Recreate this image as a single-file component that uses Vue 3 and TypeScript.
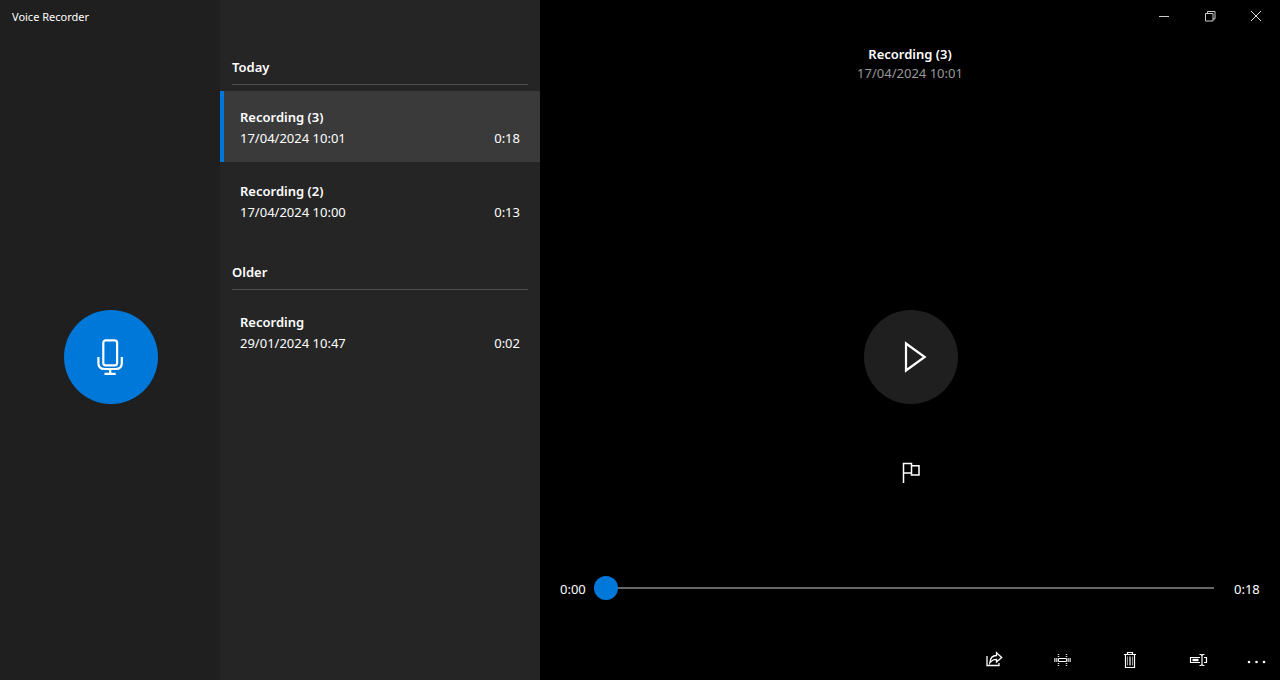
<script setup lang="ts">
import { computed, ref } from 'vue'

interface Recording {
  id: number
  name: string
  date: string
  seconds: number
}

interface Group {
  label: string
  items: Recording[]
}

const groups: Group[] = [
  {
    label: 'Today',
    items: [
      { id: 3, name: 'Recording (3)', date: '17/04/2024 10:01', seconds: 18 },
      { id: 2, name: 'Recording (2)', date: '17/04/2024 10:00', seconds: 13 },
    ],
  },
  {
    label: 'Older',
    items: [{ id: 1, name: 'Recording', date: '29/01/2024 10:47', seconds: 2 }],
  },
]

const selectedId = ref(3)
const position = ref(0)

const selected = computed(
  () => groups.flatMap((g) => g.items).find((r) => r.id === selectedId.value) ?? groups[0].items[0],
)

function formatTime(seconds: number): string {
  return `${Math.floor(seconds / 60)}:${String(seconds % 60).padStart(2, '0')}`
}

function select(id: number): void {
  selectedId.value = id
  position.value = 0
}
</script>

<template>
  <div class="window">
    <aside class="record-pane">
      <h1 class="app-title">Voice Recorder</h1>
      <div class="record-area">
        <button class="round record" type="button" aria-label="Record">
          <svg width="40" height="40" viewBox="1 0 40 40" fill="none" stroke="#fff" stroke-width="2.2">
            <rect x="13.3" y="3.4" width="13.8" height="25" rx="2.4" />
            <path d="M8.4 20v6q0 6 6 6h11.4q6 0 6-6v-6M20.2 32v5M14.5 36.8h11.2" />
          </svg>
        </button>
      </div>
    </aside>

    <nav class="list-pane" aria-label="Recordings">
      <section v-for="group in groups" :key="group.label" class="group">
        <h2 class="group-title">{{ group.label }}</h2>
        <ul class="items">
          <li v-for="item in group.items" :key="item.id">
            <button
              type="button"
              class="item"
              :class="{ selected: item.id === selectedId }"
              @click="select(item.id)"
            >
              <span class="item-name">{{ item.name }}</span>
              <span class="item-meta">
                <span>{{ item.date }}</span>
                <span>{{ formatTime(item.seconds) }}</span>
              </span>
            </button>
          </li>
        </ul>
      </section>
    </nav>

    <main class="player">
      <div class="caption">
        <button type="button" aria-label="Minimise">
          <svg width="12" height="12" viewBox="0 0 12 12" fill="none" stroke="#ccc"><path d="M1 6.5h10" /></svg>
        </button>
        <button type="button" aria-label="Restore">
          <svg width="12" height="12" viewBox="0 0 12 12" fill="none" stroke="#ccc">
            <path d="M1.5 3.5h7.500v7.500h-7.500zM3.500 3.500v-2h7.500v7.500h-2" />
          </svg>
        </button>
        <button type="button" aria-label="Close">
          <svg width="12" height="12" viewBox="0 0 12 12" fill="none" stroke="#ddd">
            <path d="M1 1l10 10M11 1L1 11" />
          </svg>
        </button>
      </div>

      <header class="heading">
        <h2>{{ selected.name }}</h2>
        <p>{{ selected.date }}</p>
      </header>

      <div class="transport">
        <button class="round play" type="button" aria-label="Play">
          <svg width="40" height="40" viewBox="1 0 40 40" fill="none" stroke="#fff" stroke-width="2.2">
            <path d="M16 6.5v27L34.700 20z" />
          </svg>
        </button>
      </div>

      <div class="marker-row">
        <button class="marker" type="button" aria-label="Add a marker">
          <svg width="24" height="24" viewBox="0 0 24 24" fill="none" stroke="#fff" stroke-width="1.5">
            <path d="M5.500 23V3.500h8V13h-8M13.500 5.700H21V15h-7.500v-2" />
          </svg>
        </button>
      </div>

      <div class="seek">
        <span class="elapsed">{{ formatTime(position) }}</span>
        <input
          v-model.number="position"
          type="range"
          min="0"
          :max="selected.seconds"
          aria-label="Playback position"
        />
        <span class="total">{{ formatTime(selected.seconds) }}</span>
      </div>

      <div class="toolbar">
        <button type="button" aria-label="Share">
          <svg width="20" height="20" viewBox="0 0 20 20" fill="none" stroke="#fff" stroke-width="1.3">
            <path d="M3 6v9.500h12V13" />
            <path d="M5.800 13C6.100 8.500 8.500 5.600 12.500 5.500V2.700l5.200 4.800-5.200 4.600V9.300C9.500 9.300 7.500 10.500 5.800 13z" />
          </svg>
        </button>
        <button type="button" aria-label="Trim">
          <svg width="20" height="20" viewBox="0 0 20 20" fill="none" stroke="#fff">
            <path d="M2.500 8v4M4.500 8v4M16.500 8v4M18.500 8v4" stroke="#aaa" />
            <path d="M3.500 8v4M5.500 8v4M15.500 8v4M17.500 8v4" stroke="#666" />
            <path d="M6.500 8.500h8v3h-8z" />
            <path d="M6.500 4v1m0 1v1m0 6v1m0 1v1M14.500 4v1m0 1v1m0 6v1m0 1v1" stroke="#ddd" stroke-width="1.500" />
          </svg>
        </button>
        <button type="button" aria-label="Delete">
          <svg width="20" height="20" viewBox="0 0 20 20" fill="none" stroke="#fff" stroke-width="1.2">
            <path d="M4 4.500h12M7.500 4.500v-2h5v2M5.500 4.500v13h9v-13" />
            <path d="M7.500 6.500v9M9.500 6.500v9M10.500 6.500v9M12.500 6.500v9" stroke="#999" stroke-width="1" />
          </svg>
        </button>
        <button type="button" aria-label="Rename">
          <svg width="20" height="20" viewBox="0 0 20 20" fill="none" stroke="#fff" stroke-width="1.2">
            <path d="M12 7.500H2.500v5H12M16 7.500h2.500v5H16" />
            <path d="M4.500 10h6" stroke-width="2.4" />
            <path d="M11.500 4.500h1.500l1 1 1-1h1.500M14 5.500v9M11.500 15.500h1.500l1-1 1 1h1.500" />
          </svg>
        </button>
        <button class="more" type="button" aria-label="More">
          <svg width="20" height="20" viewBox="0 0 20 20" fill="#fff">
            <circle cx="3" cy="12" r="1.3" /><circle cx="10.500" cy="12" r="1.3" /><circle cx="18" cy="12" r="1.3" />
          </svg>
        </button>
      </div>
    </main>
  </div>
</template>

<style>
body {
  margin: 0;
  background: #000;
}
</style>

<style scoped>
.window {
  display: grid;
  grid-template-columns: 220px 320px minmax(0, 1fr);
  min-height: 100vh;
  color: #fff;
  font-family: 'Segoe UI', 'Noto Sans', 'Open Sans', sans-serif;
  font-size: 13px;
  line-height: 20px;
}

button {
  margin: 0;
  padding: 0;
  border: 0;
  background: none;
  color: inherit;
  font: inherit;
  cursor: pointer;
}

svg {
  display: block;
}

h1,
h2,
p,
ul {
  margin: 0;
  padding: 0;
}

.record-pane {
  display: flex;
  flex-direction: column;
  background: #1f1f1f;
}

.app-title {
  height: 33px;
  padding-left: 12px;
  font-size: 11px;
  font-weight: 400;
  line-height: 33px;
}

.record-area,
.transport {
  flex: 1;
  display: flex;
  justify-content: center;
  padding-left: 2px;
}

.record-area {
  align-items: center;
}

.transport {
  align-items: flex-end;
  padding-bottom: 44px;
}

.round {
  display: flex;
  align-items: center;
  justify-content: center;
  width: 94px;
  height: 94px;
  border-radius: 50%;
}

.record {
  background: #0078d9;
}

.play {
  background: #1f1f1f;
}

.list-pane {
  padding-top: 36px;
  background: #252525;
}

.group-title {
  box-sizing: border-box;
  height: 49px;
  margin: 0 12px 6px;
  padding-top: 21px;
  border-bottom: 1px solid #505050;
  font-size: 13px;
  font-weight: 600;
}

.group {
  padding-bottom: 5px;
}

.items {
  display: grid;
  gap: 3px;
  list-style: none;
}

.item {
  display: flex;
  flex-direction: column;
  justify-content: center;
  box-sizing: border-box;
  width: 100%;
  height: 71px;
  padding: 2px 20px 0 16px;
  border-left: 4px solid transparent;
  line-height: 21px;
  text-align: left;
}

.item.selected {
  border-left-color: #0078d9;
  background: #3a3a3a;
}

.item-name {
  font-weight: 600;
}

.item-meta {
  display: flex;
  justify-content: space-between;
}

.player {
  display: flex;
  flex-direction: column;
  background: #000;
}

.caption {
  display: flex;
  justify-content: flex-end;
  height: 32px;
  padding-right: 1px;
}

.caption button {
  display: flex;
  align-items: center;
  justify-content: center;
  width: 46px;
}

.heading {
  padding-top: 13px;
  line-height: 19px;
  text-align: center;
}

.heading h2 {
  font-size: 13px;
  font-weight: 600;
}

.heading p {
  color: #999;
}

.marker-row {
  display: flex;
  justify-content: center;
  padding-bottom: 80px;
}

.marker {
  display: flex;
  align-items: center;
  justify-content: center;
  width: 48px;
  height: 48px;
}

.seek {
  display: flex;
  align-items: center;
  height: 24px;
  padding: 0 20px;
}

.seek span {
  width: 26px;
  padding-top: 2px;
}

.seek input {
  flex: 1;
  min-width: 0;
  height: 24px;
  margin: 0 20px 0 8px;
  background: linear-gradient(#666, #666) center / 100% 2px no-repeat;
  appearance: none;
  cursor: pointer;
}

.seek input::-webkit-slider-thumb {
  width: 24px;
  height: 24px;
  border-radius: 50%;
  background: #0078d9;
  appearance: none;
}

.toolbar {
  display: flex;
  justify-content: flex-end;
  height: 40px;
  margin-top: 40px;
}

.toolbar button {
  display: flex;
  align-items: center;
  justify-content: center;
  width: 68px;
}

.toolbar .more {
  width: 48px;
}
</style>
